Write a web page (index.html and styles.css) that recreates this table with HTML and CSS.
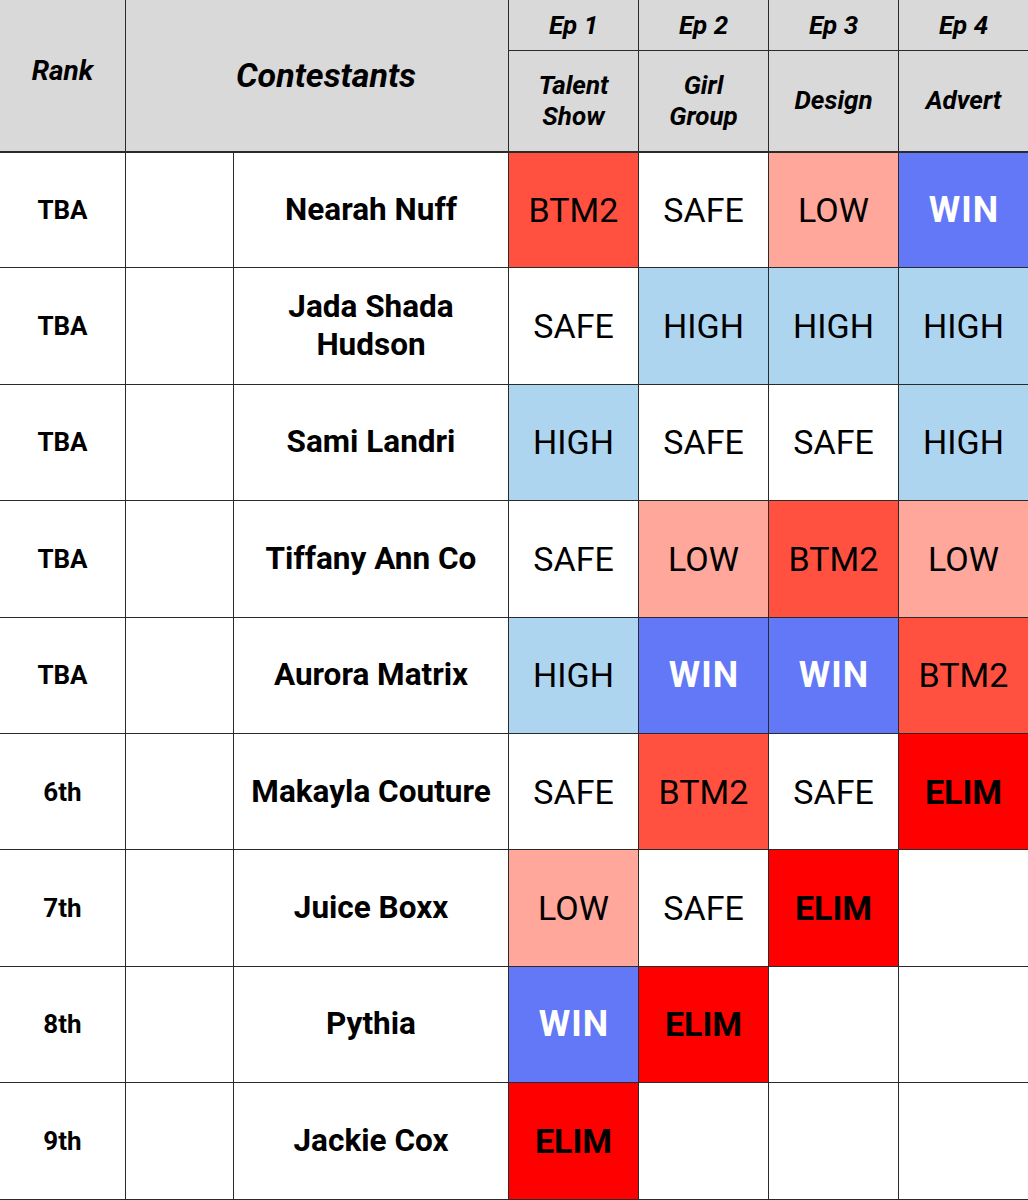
FILE: index.html
```html
<!DOCTYPE html>
<html>
<head>
<meta charset="utf-8">
<link rel="stylesheet" href="styles.css">
</head>
<body>
<table class="results">
  <colgroup>
    <col class="c-rank"><col class="c-pic"><col class="c-name">
    <col class="c-ep"><col class="c-ep"><col class="c-ep"><col class="c-ep">
  </colgroup>
  <thead>
    <tr class="h1">
      <th rowspan="2" class="rank-h">Rank</th>
      <th rowspan="2" colspan="2" class="cont-h">Contestants</th>
      <th class="ep">Ep 1</th><th class="ep">Ep 2</th><th class="ep">Ep 3</th><th class="ep">Ep 4</th>
    </tr>
    <tr class="h2">
      <th class="ch">Talent<br>Show</th><th class="ch">Girl<br>Group</th><th class="ch">Design</th><th class="ch">Advert</th>
    </tr>
  </thead>
  <tbody>
    <tr><td class="rank">TBA</td><td></td><td class="name">Nearah Nuff</td><td class="r btm">BTM2</td><td class="r safe">SAFE</td><td class="r low">LOW</td><td class="r win">WIN</td></tr>
    <tr><td class="rank">TBA</td><td></td><td class="name">Jada Shada<br>Hudson</td><td class="r safe">SAFE</td><td class="r high">HIGH</td><td class="r high">HIGH</td><td class="r high">HIGH</td></tr>
    <tr><td class="rank">TBA</td><td></td><td class="name">Sami Landri</td><td class="r high">HIGH</td><td class="r safe">SAFE</td><td class="r safe">SAFE</td><td class="r high">HIGH</td></tr>
    <tr><td class="rank">TBA</td><td></td><td class="name">Tiffany Ann Co</td><td class="r safe">SAFE</td><td class="r low">LOW</td><td class="r btm">BTM2</td><td class="r low">LOW</td></tr>
    <tr><td class="rank">TBA</td><td></td><td class="name">Aurora Matrix</td><td class="r high">HIGH</td><td class="r win">WIN</td><td class="r win">WIN</td><td class="r btm">BTM2</td></tr>
    <tr><td class="rank">6th</td><td></td><td class="name">Makayla Couture</td><td class="r safe">SAFE</td><td class="r btm">BTM2</td><td class="r safe">SAFE</td><td class="r elim">ELIM</td></tr>
    <tr><td class="rank">7th</td><td></td><td class="name">Juice Boxx</td><td class="r low">LOW</td><td class="r safe">SAFE</td><td class="r elim">ELIM</td><td class="r"></td></tr>
    <tr><td class="rank">8th</td><td></td><td class="name">Pythia</td><td class="r win">WIN</td><td class="r elim">ELIM</td><td class="r"></td><td class="r"></td></tr>
    <tr><td class="rank">9th</td><td></td><td class="name">Jackie Cox</td><td class="r elim">ELIM</td><td class="r"></td><td class="r"></td><td class="r"></td></tr>
  </tbody>
</table>
</body>
</html>
```
FILE: styles.css
```css
html, body {
  margin: 0;
  padding: 0;
  background: #ffffff;
}
body {
  font-family: Roboto, "Liberation Sans", sans-serif;
  color: #000;
}
.results {
  border-collapse: collapse;
  table-layout: fixed;
  width: 1029px;
  margin-left: -1px;
  margin-top: -1px;
}
.c-rank { width: 126px; }
.c-pic { width: 108px; }
.c-name { width: 275px; }
.c-ep { width: 130px; }
.results th, .results td {
  border: 1px solid #2a2a2a;
  padding: 0;
  text-align: center;
  vertical-align: middle;
}
.results thead th {
  background: #d9d9d9;
  font-style: italic;
  font-weight: 700;
}
.results thead tr.h2 th,
.results thead .rank-h,
.results thead .cont-h {
  border-bottom: 2px solid #2a2a2a;
}
.h1 { height: 51px; }
.h2 { height: 101px; }
.rank-h {
  font-size: 28px;
  padding-bottom: 10px !important;
}
.cont-h {
  font-size: 34px;
  padding-left: 18px !important;
}
.ep {
  font-size: 26px;
}
.ch {
  font-size: 26px;
  line-height: 31px;
}
tbody tr { height: 116.4px; }
.rank {
  font-size: 26px;
  font-weight: 700;
}
.name {
  font-size: 31.5px;
  font-weight: 700;
  line-height: 38px;
}
.r {
  font-size: 34px;
  font-weight: 400;
}
.safe { background: #ffffff; }
.btm { background: #ff5040; }
.low { background: #ffa79b; }
.high { background: #aed5f0; }
.win {
  background: #6378f6;
  color: #ffffff;
  font-weight: 700;
  font-size: 36px;
  letter-spacing: 1px;
  text-indent: 1px;
}
.elim { background: #ff0000; font-weight: 700; }
```
